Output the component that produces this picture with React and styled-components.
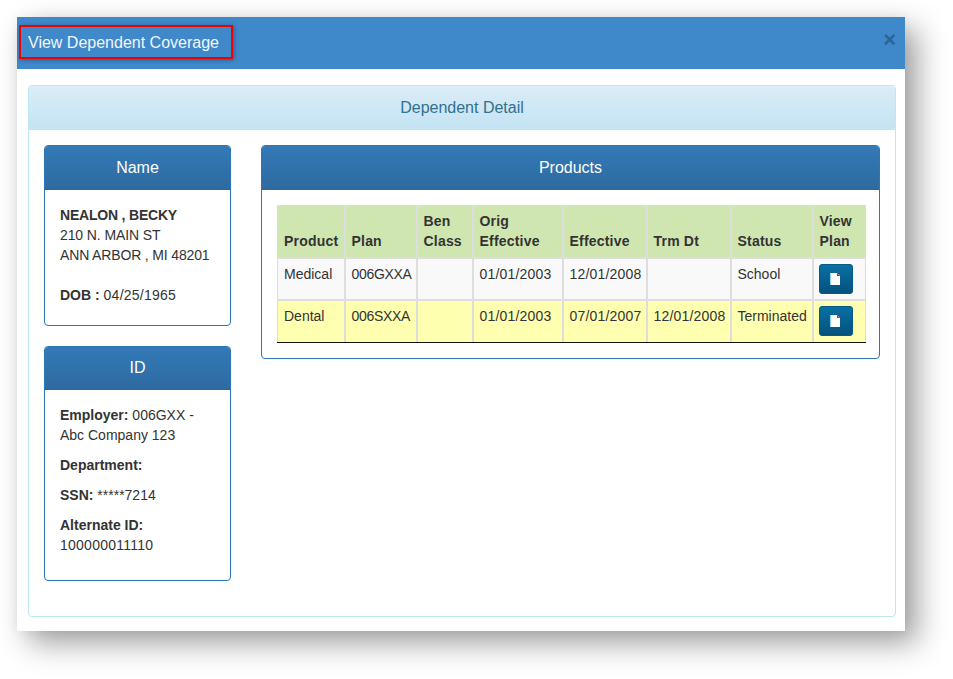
import React from "react";
import styled, { createGlobalStyle } from "styled-components";

const Global = createGlobalStyle`
  html, body { margin: 0; padding: 0; background: #fff; }
  body { font-family: "Liberation Sans", Arial, sans-serif; font-size: 14px; line-height: 20px; color: #333; }
`;

const Page = styled.div`
  width: 953px;
  height: 679px;
  padding: 17px 48px 48px 17px;
  box-sizing: border-box;
  overflow: hidden;
`;

const Modal = styled.div`
  width: 888px;
  height: 614px;
  background: #fff;
  box-shadow: 12px 12px 28px rgba(0, 0, 0, 0.38), 0 0 12px rgba(0, 0, 0, 0.05);
`;

const ModalHeader = styled.header`
  height: 52px;
  box-sizing: border-box;
  background: #3f88ca;
  padding: 8px 9px 0 2px;
  display: flex;
  justify-content: space-between;
  align-items: flex-start;
`;

const ModalTitle = styled.h4`
  margin: 0;
  width: 214px;
  height: 34px;
  box-sizing: border-box;
  border: 2px solid #f00000;
  padding-left: 7px;
  font-size: 16px;
  font-weight: 400;
  line-height: 31px;
  color: #f2f6fb;
  box-shadow: 1px 1px 4px rgba(0, 0, 0, 0.35);
`;

const CloseButton = styled.button`
  border: 0;
  background: none;
  padding: 0;
  margin-top: 2px;
  font-family: "Liberation Sans", Arial, sans-serif;
  font-size: 22px;
  font-weight: 700;
  line-height: 26px;
  color: #000;
  opacity: 0.27;
`;

const ModalBody = styled.div`
  padding: 16px 9px 14px 11px;
`;

const DetailPanel = styled.section`
  height: 532px;
  box-sizing: border-box;
  border: 1px solid #bce8f1;
  border-radius: 4px;
  overflow: hidden;
`;

const DetailHeading = styled.h3`
  margin: 0;
  height: 44px;
  background: linear-gradient(#d9edf7, #c4e3f3);
  color: #31708f;
  font-size: 16px;
  font-weight: 400;
  line-height: 44px;
  text-align: center;
`;

const Columns = styled.div`
  display: grid;
  grid-template-columns: 187px 619px;
  column-gap: 30px;
  align-items: start;
  padding: 15px;
`;

const SideColumn = styled.div`
  display: flex;
  flex-direction: column;
  gap: 20px;
`;

const Card = styled.section`
  border: 1px solid #2e77b5;
  border-radius: 4px;
  overflow: hidden;
`;

const CardHeading = styled.h3`
  margin: -1px -1px 0;
  height: ${(p) => p.$h}px;
  background: linear-gradient(#337ab7, #2e6aa0);
  color: #fff;
  font-size: 16px;
  font-weight: 400;
  line-height: ${(p) => p.$h}px;
  text-align: center;
`;

const CardBody = styled.div`
  padding: 15px 15px ${(p) => p.$bottom}px;
`;

const Line = styled.div`
  letter-spacing: ${(p) => p.$track || 0}px;
`;

const Para = styled.p`
  margin: 0 0 10px;
`;

const Figure = styled.span`
  letter-spacing: 0.25px;
`;

const Spacer = styled.div`
  height: 20px;
`;

const Table = styled.table`
  width: 588px;
  table-layout: fixed;
  border-collapse: collapse;
  box-shadow: 0 1px 0 #111;
`;

const Th = styled.th`
  background: #d0e6b1;
  border: 2px solid #ddd;
  border-top-width: 1px;
  border-left-width: ${(p) => (p.$first ? 1 : 2)}px;
  &:last-child { border-right-width: 1px; }
  padding: 5px 6px 6px;
  text-align: left;
  vertical-align: bottom;
  font-weight: 700;
  letter-spacing: 0.2px;
  color: #333;
`;

const Row = styled.tr`
  &:last-child td { border-bottom: 0; padding-bottom: 6px; }
`;

const Td = styled.td`
  background: ${(p) => (p.$alt ? "#ffffb0" : "#f9f9f9")};
  border: 2px solid #ddd;
  border-left-width: ${(p) => (p.$first ? 1 : 2)}px;
  &:last-child { border-right-width: 1px; padding-left: 5px; }
  padding: 5px 6px;
  height: 30px;
  vertical-align: top;
  white-space: nowrap;
  letter-spacing: ${(p) => p.$track || 0}px;
`;

const DocButton = styled.button`
  display: flex;
  align-items: center;
  justify-content: center;
  width: 34px;
  height: 30px;
  padding: 0 2px 0 0;
  border: 1px solid #045a88;
  border-radius: 3px;
  background: linear-gradient(#0a70a3, #04517d);
`;

const DocIcon = () => (
  <svg width="10" height="12" viewBox="0 0 10 12">
    <path d="M0 0H7L10 3V12H0Z" fill="#fff" />
    <rect x="0" y="0" width="1" height="12" fill="#8fd3f4" />
    <path d="M7 0L10 3H7Z" fill="#1f5f9a" />
    <rect x="8" y="1" width="1" height="1" fill="#e58fb0" />
  </svg>
);

const widths = [67, 72, 56, 90, 84, 84, 82, 53];
const tracks = [0, -0.3, 0, 0.2, 0.2, 0.2, 0];
const rows = [
  { cells: ["Medical", "006GXXA", "", "01/01/2003", "12/01/2008", "", "School"] },
  { cells: ["Dental", "006SXXA", "", "01/01/2003", "07/01/2007", "12/01/2008", "Terminated"], alt: true },
];

export default function App() {
  return (
    <Page>
      <Global />
      <Modal>
        <ModalHeader>
          <ModalTitle>View Dependent Coverage</ModalTitle>
          <CloseButton>×</CloseButton>
        </ModalHeader>
        <ModalBody>
          <DetailPanel>
            <DetailHeading>Dependent Detail</DetailHeading>
            <Columns>
              <SideColumn>
                <Card>
                  <CardHeading $h={45}>Name</CardHeading>
                  <CardBody $bottom={20}>
                    <Line $track={-0.2}><b>NEALON , BECKY</b></Line>
                    <Line $track={-0.1}>210 N. MAIN ST</Line>
                    <Line $track={-0.15}>ANN ARBOR , MI 48201</Line>
                    <Spacer />
                    <Line><b>DOB :</b> <Figure>04/25/1965</Figure></Line>
                  </CardBody>
                </Card>
                <Card>
                  <CardHeading $h={44}>ID</CardHeading>
                  <CardBody $bottom={15}>
                    <Para><b>Employer:</b> 006GXX - Abc Company 123</Para>
                    <Para><b>Department:</b></Para>
                    <Para><b>SSN:</b> *****7214</Para>
                    <Para><b>Alternate ID:</b> <Figure>100000011110</Figure></Para>
                  </CardBody>
                </Card>
              </SideColumn>
              <Card>
                <CardHeading $h={45}>Products</CardHeading>
                <CardBody $bottom={16}>
                  <Table>
                    <colgroup>
                      {widths.map((w, i) => <col key={i} style={{ width: w }} />)}
                    </colgroup>
                    <thead>
                      <tr>
                        <Th $first>Product</Th>
                        <Th>Plan</Th>
                        <Th>Ben Class</Th>
                        <Th>Orig Effective</Th>
                        <Th>Effective</Th>
                        <Th>Trm Dt</Th>
                        <Th>Status</Th>
                        <Th>View Plan</Th>
                      </tr>
                    </thead>
                    <tbody>
                      {rows.map((r) => (
                        <Row key={r.cells[0]}>
                          {r.cells.map((c, i) => (
                            <Td key={i} $alt={r.alt} $first={i === 0} $track={tracks[i]}>{c}</Td>
                          ))}
                          <Td $alt={r.alt}>
                            <DocButton aria-label="View plan"><DocIcon /></DocButton>
                          </Td>
                        </Row>
                      ))}
                    </tbody>
                  </Table>
                </CardBody>
              </Card>
            </Columns>
          </DetailPanel>
        </ModalBody>
      </Modal>
    </Page>
  );
}
